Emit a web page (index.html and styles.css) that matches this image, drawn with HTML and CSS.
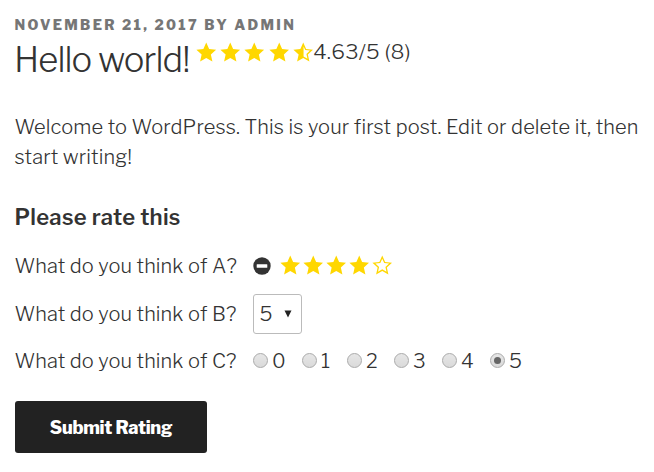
FILE: index.html
```html
<!DOCTYPE html>
<html lang="en">
<head>
<meta charset="utf-8">
<title>Hello world!</title>
<link rel="stylesheet" href="styles.css">
</head>
<body>
<svg class="defs" aria-hidden="true">
  <defs>
    <path id="star" d="M10 .6 12.8 6.8 19.6 7.5 14.5 12.1 16 19 10 15.5 4 19 5.5 12.1.4 7.5 7.2 6.8Z"/>
    <path id="outline" fill-rule="evenodd" d="M10 .6 12.8 6.8 19.6 7.5 14.5 12.1 16 19 10 15.5 4 19 5.5 12.1.4 7.5 7.2 6.8ZM10 3.7 8.1 7.9 3.3 8.4 6.9 11.6 5.9 16.4 10 14 14.1 16.4 13.1 11.6 16.7 8.4 11.9 7.9Z"/>
    <path id="half" fill-rule="evenodd" d="M10 .6 12.8 6.8 19.6 7.5 14.5 12.1 16 19 10 15.5 4 19 5.5 12.1.4 7.5 7.2 6.8ZM10.3 4.4V14.1L14.1 16.3 13.1 11.6 16.6 8.4 11.9 7.9Z"/>
  </defs>
</svg>
<article class="post">
  <p class="meta">November 21, 2017 by admin</p>
  <header class="heading">
    <h1 class="title">Hello world!</h1>
    <div class="stars stars-result">
      <svg viewBox="0 0 20 20"><use href="#star"/></svg>
      <svg viewBox="0 0 20 20"><use href="#star"/></svg>
      <svg viewBox="0 0 20 20"><use href="#star"/></svg>
      <svg viewBox="0 0 20 20"><use href="#star"/></svg>
      <svg viewBox="0 0 20 20"><use href="#half"/></svg>
    </div>
    <span class="score">4.63/5 (8)</span>
  </header>
  <p class="content"><span class="line-a">Welcome to WordPress. This is your first post. Edit or delete it, then</span> <span class="line-b">start writing!</span></p>
  <form class="rating">
    <h2 class="subtitle">Please rate this</h2>
    <div class="row row-a">
      <span class="question">What do you think of A?</span>
      <svg class="minus" viewBox="0 0 18 18"><circle cx="9" cy="9" r="8.7"/><rect x="3.7" y="7.3" width="10.6" height="3.4" rx=".5" fill="#fff"/></svg>
      <div class="stars stars-input">
        <svg viewBox="0 0 20 20"><use href="#star"/></svg>
        <svg viewBox="0 0 20 20"><use href="#star"/></svg>
        <svg viewBox="0 0 20 20"><use href="#star"/></svg>
        <svg viewBox="0 0 20 20"><use href="#star"/></svg>
        <svg viewBox="0 0 20 20"><use href="#outline"/></svg>
      </div>
    </div>
    <div class="row row-b">
      <span class="question">What do you think of B?</span>
      <div class="select"><span>5</span><svg class="arrow" viewBox="0 0 8 8"><path d="M.5.5H7.5L4 7.5Z"/></svg></div>
    </div>
    <div class="row row-c">
      <span class="question">What do you think of C?</span>
      <div class="options">
        <label><i class="radio"></i>0</label>
        <label><i class="radio"></i>1</label>
        <label><i class="radio"></i>2</label>
        <label><i class="radio"></i>3</label>
        <label><i class="radio"></i>4</label>
        <label><i class="radio checked"></i>5</label>
      </div>
    </div>
    <button class="submit" type="button">Submit Rating</button>
  </form>
</article>
</body>
</html>
```
FILE: styles.css
```css
* { box-sizing: border-box; }
body {
  margin: 0;
  background: #fff;
  color: #333;
  font: 300 20px/30px "Libre Franklin", Roboto, sans-serif;
}
p, h1, h2 { margin: 0; }
svg { display: block; }
.defs { position: absolute; width: 0; height: 0; }
.post { padding: 15px 0 0 15px; white-space: nowrap; }
.meta {
  height: 20px;
  color: #767676;
  font-size: 14px;
  font-weight: 800;
  line-height: 20px;
  letter-spacing: 2.32px;
  text-transform: uppercase;
  text-indent: -.5px;
}
.heading { display: flex; height: 50px; align-items: flex-start; }
.title { width: 181px; font-size: 34.5px; font-weight: 300; line-height: 50px; letter-spacing: -.9px; text-indent: -1px; }
.stars { display: flex; fill: gold; }
.stars svg { width: 20.5px; height: 20.5px; }
.stars-result { gap: 3.7px; padding-top: 7px; }
.score { font-size: 21px; line-height: 34px; letter-spacing: .2px; }
.content { height: 60px; margin-top: 27px; }
.content span { display: block; text-indent: -.5px; }
.line-a { letter-spacing: .12px; }
.line-b { letter-spacing: .12px; }
.subtitle { margin-top: 30px; font-size: 22px; font-weight: 600; line-height: 30px; letter-spacing: .28px; text-indent: -.5px; }
.row { display: flex; align-items: center; }
.question { width: 238px; letter-spacing: .1px; text-indent: -.5px; }
.row-a { height: 30px; margin-top: 19px; }
.row-b { height: 40px; margin-top: 13px; }
.row-c { height: 30px; margin-top: 12px; }
.minus { width: 18px; height: 18px; fill: #333; }
.stars-input { gap: 2.4px; margin: -1px 0 0 9px; }
.select {
  display: flex;
  width: 49px;
  height: 40px;
  align-items: center;
  padding: 0 9.5px 0 5.5px;
  justify-content: space-between;
  border: 1px solid #bbb;
  border-radius: 3px;
}
.arrow { width: 8px; height: 8px; fill: #222; }
.options { display: flex; }
.options label { display: flex; width: 48px; align-items: center; gap: 4px; }
.options label:nth-child(1) { width: 49px; }
.options label:nth-child(2) { width: 45px; }
.options label:nth-child(3) { width: 47px; }
.radio {
  display: flex;
  width: 15px;
  height: 15px;
  margin-top: -2px;
  align-items: center;
  justify-content: center;
  border: 1px solid #aaa;
  border-radius: 50%;
  background: linear-gradient(#e6e6e6, #dadada);
}
.options label:nth-child(6) { width: 49px; }
.checked::after { content: ""; width: 7px; height: 7px; border-radius: 50%; background: #666; }
.submit {
  display: block;
  width: 192px;
  height: 52px;
  margin-top: 25px;
  padding: 0;
  border: 0;
  border-radius: 3px;
  background: #222;
  color: #fff;
  font: 800 18px/54px "Libre Franklin", Roboto, sans-serif;
  letter-spacing: -.27px;
}
```
